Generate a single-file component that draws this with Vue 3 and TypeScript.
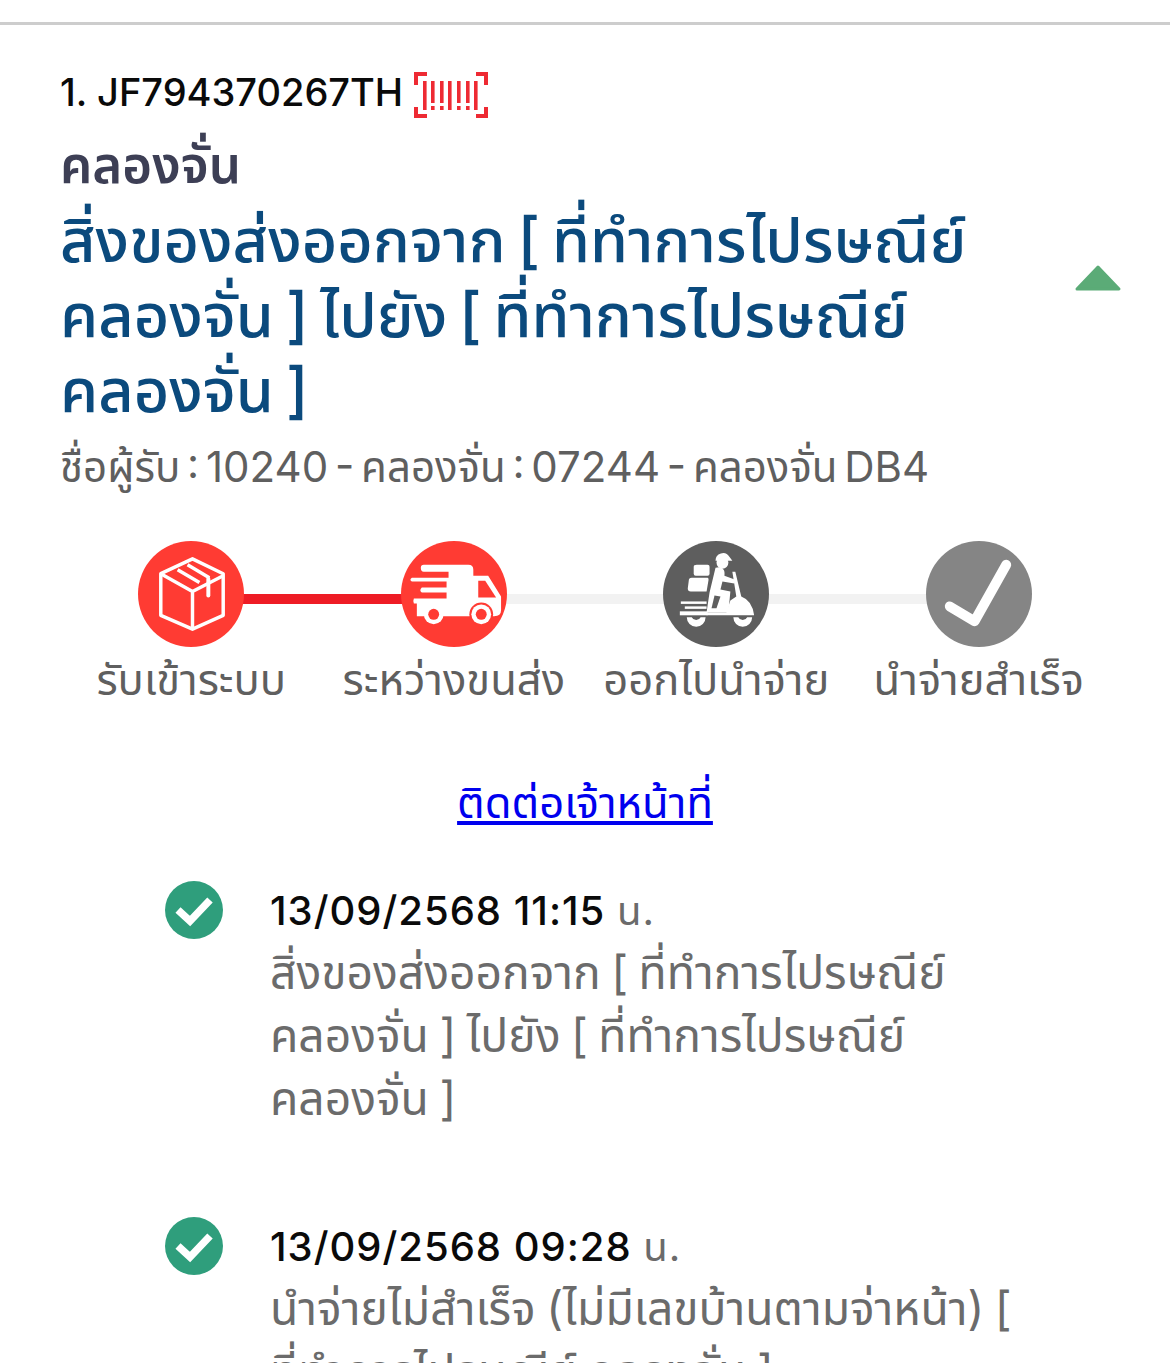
<script setup lang="ts">
interface Step {
  label: string;
  kind: string;
}

interface Track {
  date: string;
  lines: string[];
}

const steps: Step[] = [
  { label: 'รับเข้าระบบ', kind: 'box' },
  { label: 'ระหว่างขนส่ง', kind: 'truck' },
  { label: 'ออกไปนำจ่าย', kind: 'scooter' },
  { label: 'นำจ่ายสำเร็จ', kind: 'done' },
];

const heading = [
  'สิ่งของส่งออกจาก [ ที่ทำการไปรษณีย์',
  'คลองจั่น ] ไปยัง [ ที่ทำการไปรษณีย์',
  'คลองจั่น ]',
];

const tracks: Track[] = [
  {
    date: '13/09/2568 11:15',
    lines: [
      'สิ่งของส่งออกจาก [ ที่ทำการไปรษณีย์',
      'คลองจั่น ] ไปยัง [ ที่ทำการไปรษณีย์',
      'คลองจั่น ]',
    ],
  },
  {
    date: '13/09/2568 09:28',
    lines: [
      'นำจ่ายไม่สำเร็จ (ไม่มีเลขบ้านตามจ่าหน้า) [',
      'ที่ทำการไปรษณีย์ คลองจั่น ]',
    ],
  },
];

// x, height of each barcode stripe
const bars = [
  [14, 29], [22, 22], [31, 22], [39, 29], [48, 22], [57, 22], [65, 29],
];
</script>

<template>
  <div class="page">
    <div class="card">
      <div class="code-row">
        <span class="code">1. JF794370267TH</span>
        <svg class="barcode" width="85" height="60" viewBox="0 0 85 60">
          <path d="M18 9H7V20M67 9H77V20M7 42V51H18M77 42V51H67" fill="none" stroke="#ee2a33" stroke-width="4" />
          <g fill="#ee2a33">
            <template v-for="b in bars" :key="b[0]">
              <rect :x="b[0]" y="16" width="3.6" :height="b[1]" />
              <rect v-if="b[1] < 29" :x="b[0]" y="41" width="3.6" height="4" />
            </template>
          </g>
        </svg>
      </div>
      <div class="office">คลองจั่น</div>
      <div class="heading-row">
        <div class="heading">
          <div v-for="line in heading" :key="line">{{ line }}</div>
        </div>
        <svg class="arrow" width="48" height="30" viewBox="0 0 48 30">
          <path d="M24 3L45 25H3Z" fill="#5bab77" stroke="#5bab77" stroke-width="3" stroke-linejoin="round" />
        </svg>
      </div>
      <div class="receiver">ชื่อผู้รับ : 10240 - คลองจั่น : 07244 - คลองจั่น DB4</div>

      <div class="steps">
        <div v-for="step in steps" :key="step.kind" class="step" :class="`step-${step.kind}`">
          <div class="circle">
            <svg v-if="step.kind === 'box'" width="106" height="106" viewBox="0 0 107 107">
              <g fill="none" stroke="#fff" stroke-width="3.5" stroke-linejoin="round">
                <path d="M55 18L86 33V75L55 89L23 75V33Z" />
                <path d="M23 33L55 51L86 35M55 51V89" />
                <path d="M40 29L62 42M50 24L72 37" />
                <path d="M71 38V55" stroke-width="4" stroke-linecap="round" />
              </g>
            </svg>
            <svg v-else-if="step.kind === 'truck'" width="106" height="106" viewBox="0 0 107 107">
              <g fill="#fff">
                <path d="M20 27Q20 24 23 24H68Q73 24 73 29V35H88L101 56V70Q101 76 94 76H16V63H13Q12 60 13 58H46V52H21Q18 50 21 47H46V41H11Q8 39 11 37H48V31H23Q20 31 20 27Z" />
              </g>
              <path d="M78 40H85L96 57H78Z" fill="#ff3b33" />
              <circle cx="81" cy="74" r="12" fill="#ff3b33" />
              <g fill="#fff">
                <circle cx="33" cy="74" r="10" />
                <circle cx="81" cy="74" r="10" />
              </g>
              <g fill="#ff3b33">
                <circle cx="33" cy="74" r="5.5" />
                <circle cx="81" cy="74" r="5.5" />
              </g>
            </svg>
            <svg v-else-if="step.kind === 'scooter'" width="106" height="106" viewBox="0 0 107 107">
              <g fill="#fff">
                <path d="M34 24H45Q47 24 47 26V33Q47 35 45 35H33Q31 35 31 33V26Q31 24 34 24Z" />
                <path d="M29 37H45Q46 37 46 39L44 51H28Q25 51 25 48L26 40Q26 37 29 37Z" />
                <circle cx="60" cy="22" r="6" />
                <path d="M53 20A7.5 7.5 0 0 1 67 16L70 20H53Z" />
                <path d="M53 27C60 25 63 29 62 35L73 39L72 43L60 41L58 49L68 51L66 72H44L47 52Z" />
                <path d="M70 31H73L79 56Q90 60 92 75H44V72L64 72L68 60L74 56Z" />
                <rect x="18" y="61" width="26" height="2.5" />
                <rect x="22" y="66" width="22" height="2.5" />
                <rect x="17" y="71" width="28" height="4" />
                <path d="M24 77A9.5 9.5 0 0 0 43 77H38A5 5 0 0 1 29 77Z" />
                <path d="M71 77A9.5 9.5 0 0 0 90 77H85A5 5 0 0 1 76 77Z" />
              </g>
              <path d="M52 55L58 56L54 68H49Z" fill="#5e5e5e" />
            </svg>
            <svg v-else width="106" height="106" viewBox="0 0 107 107">
              <path d="M24 66L49 81L81 24" fill="none" stroke="#fff" stroke-width="10" stroke-linecap="round" stroke-linejoin="round" />
            </svg>
          </div>
          <div class="step-label">{{ step.label }}</div>
        </div>
      </div>

      <div class="contact"><a href="#">ติดต่อเจ้าหน้าที่</a></div>

      <div class="tracks">
        <div v-for="track in tracks" :key="track.date" class="track">
          <svg class="tick" width="58" height="58" viewBox="0 0 58 58">
            <circle cx="29" cy="29" r="29" fill="#2f9e7c" />
            <path d="M13 29L25 40L45 19" fill="none" stroke="#fff" stroke-width="7.5" />
          </svg>
          <div class="track-body">
            <div class="track-date">{{ track.date }} <span>น.</span></div>
            <div v-for="line in track.lines" :key="line" class="track-line">{{ line }}</div>
          </div>
        </div>
      </div>
    </div>
  </div>
</template>

<style scoped>
.page {
  height: 1363px;
  overflow: hidden;
  background: #fff;
  font-family: "Inter", "Noto Sans Thai", "Noto Sans", sans-serif;
}

.card {
  margin-top: 22px;
  border-top: 3px solid #cdcdcd;
  padding: 42px 48px 0 60px;
}

.code-row {
  display: flex;
  align-items: center;
  gap: 6px;
  height: 50px;
}

.code {
  font-size: 38px;
  line-height: 50px;
  font-weight: 500;
  color: #0a0a0a;
}

.barcode {
  margin-top: 6px;
}

.office {
  margin-top: 20px;
  margin-bottom: 10px;
  font-size: 51px;
  line-height: 56px;
  font-weight: 600;
  color: #3d3f55;
}

.heading-row {
  display: flex;
  justify-content: space-between;
  align-items: center;
}

.heading {
  font-size: 61.3px;
  line-height: 75px;
  font-weight: 500;
  word-spacing: -4.5px;
  color: #0b4a7d;
  white-space: nowrap;
}

.arrow {
  flex: none;
  margin-bottom: 74px;
}

.receiver {
  margin-top: 14px;
  font-size: 42px;
  line-height: 50px;
  word-spacing: -5px;
  color: #5f5f5f;
}

.steps {
  display: grid;
  grid-template-columns: repeat(4, 262.5px);
  margin-top: 49px;
}

.step {
  position: relative;
  display: flex;
  flex-direction: column;
  align-items: center;
}

.step::after {
  content: "";
  position: absolute;
  left: 50%;
  top: 53px;
  width: 100%;
  height: 10px;
  background: #f2f2f2;
}

.step-box::after {
  background: #ee1c25;
}

.step-done::after {
  display: none;
}

.circle {
  position: relative;
  z-index: 1;
  display: flex;
  align-items: center;
  justify-content: center;
  width: 106px;
  height: 106px;
  border-radius: 50%;
  background: #ff3b33;
}

.step-scooter .circle {
  background: #5e5e5e;
}

.step-done .circle {
  background: #858585;
}

.step-label {
  margin-top: 7px;
  font-size: 43.5px;
  line-height: 50px;
  color: #5f5f5f;
  white-space: nowrap;
}

.contact {
  margin-top: 70px;
  margin-right: 12px;
  text-align: center;
  font-size: 43.5px;
  line-height: 56px;
}

.contact a {
  color: #0000ee;
}

.tracks {
  margin-top: 51px;
  padding-left: 105px;
}

.track {
  display: flex;
  gap: 47px;
  margin-bottom: 87px;
}

.tick {
  flex: none;
}

.track-date {
  font-size: 40px;
  line-height: 60px;
  font-weight: 500;
  letter-spacing: 1px;
  color: #0a0a0a;
}

.track-date span {
  font-weight: 400;
  color: #6b6b6b;
}

.track-line {
  font-size: 46.2px;
  line-height: 63px;
  word-spacing: -2.5px;
  color: #6b6b6b;
  white-space: nowrap;
}
</style>

<style>
html,
body {
  margin: 0;
  overflow: hidden;
}
</style>
